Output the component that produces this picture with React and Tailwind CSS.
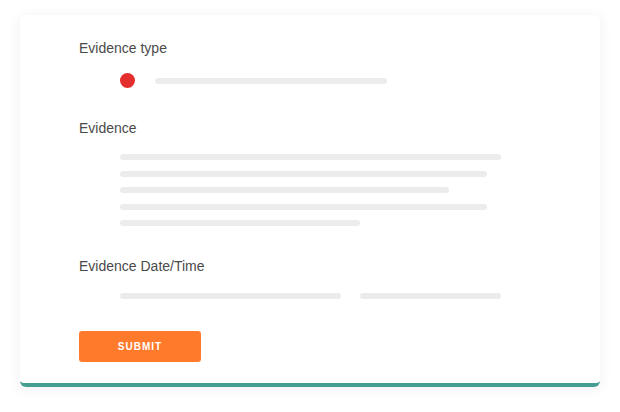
import React from 'react';

const Bar = ({ w }) => <div className={`h-[6px] rounded-full bg-[#ececec] ${w}`} />;

const Label = ({ children }) => (
  <div className="text-[14px] leading-[18px] text-[#4a4a4a]" style={{ fontFamily: '"Liberation Sans", Arial, sans-serif' }}>
    {children}
  </div>
);

export default function App() {
  return (
    <div className="w-[620px] h-[412px] bg-white pt-[15px] pl-[20px]">
      <div className="w-[580px] h-[372px] bg-white rounded-md border-b-4 border-[#469e93] shadow-[0_2px_14px_rgba(30,40,90,0.07)] pl-[59px] pt-[24px] flex flex-col">
        <Label>Evidence type</Label>
        <div className="flex items-center mt-[16px] ml-[41px]">
          <div className="w-[15px] h-[15px] rounded-full bg-[#e42e2e]" />
          <div className="ml-[20px]">
            <Bar w="w-[232px]" />
          </div>
        </div>

        <div className="mt-[31px]">
          <Label>Evidence</Label>
        </div>
        <div className="mt-[17px] ml-[41px] flex flex-col gap-[10.5px]">
          <Bar w="w-[381px]" />
          <Bar w="w-[367px]" />
          <Bar w="w-[329px]" />
          <Bar w="w-[367px]" />
          <Bar w="w-[240px]" />
        </div>

        <div className="mt-[31px]">
          <Label>Evidence Date/Time</Label>
        </div>
        <div className="mt-[18px] ml-[41px] flex gap-[19px]">
          <Bar w="w-[221px]" />
          <Bar w="w-[141px]" />
        </div>

        <button
          className="mt-[32px] w-[122px] h-[31px] rounded-[3px] bg-[#ff7a2b] text-white text-[10px] font-bold tracking-[1px] flex items-center justify-center"
          style={{ fontFamily: '"Liberation Sans", Arial, sans-serif' }}
        >
          SUBMIT
        </button>
      </div>
    </div>
  );
}
